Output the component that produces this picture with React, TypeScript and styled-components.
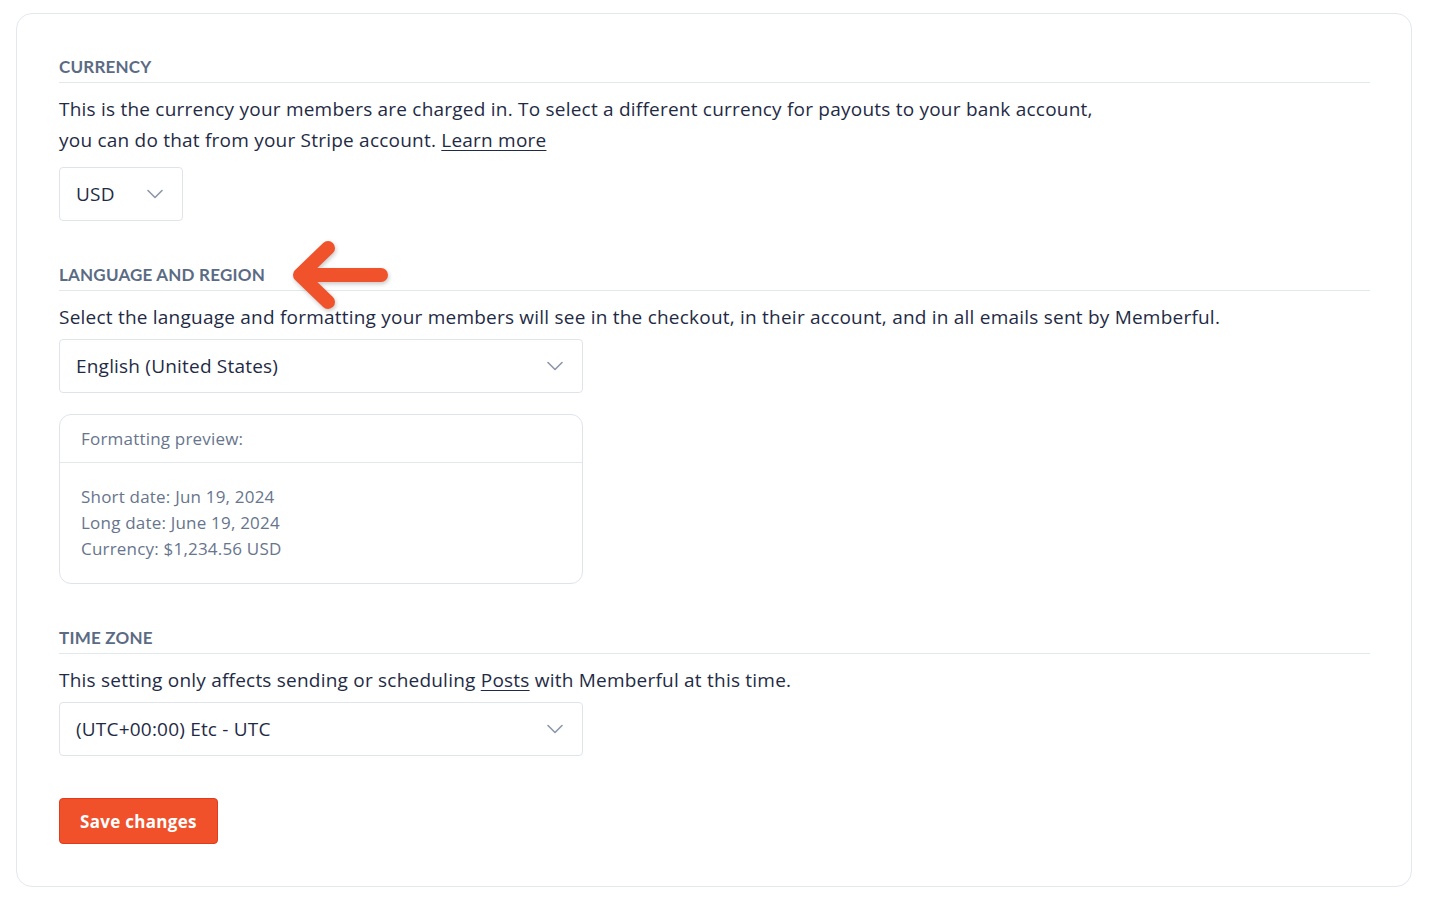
import styled, { createGlobalStyle } from "styled-components";

const GlobalStyle = createGlobalStyle`
  html, body {
    margin: 0;
    padding: 0;
    background: #ffffff;
  }
  body {
    font-family: "Open Sans", "Lato", sans-serif;
    color: #1f2b45;
  }
`;

const Page = styled.div`
  padding: 13px 28px 11px 16px;
`;

const Card = styled.div`
  border: 1px solid #e3e8ef;
  border-radius: 16px;
  padding: 42px 41px 42px 42px;
  background: #fff;
`;

const Section = styled.section<{ $first?: boolean }>`
  position: relative;
  margin-top: ${(p) => (p.$first ? "0" : "43px")};
`;

const Label = styled.h3`
  margin: 0;
  padding-bottom: 4px;
  border-bottom: 1px solid #e3e8ef;
  font-family: "Lato", "Open Sans", sans-serif;
  font-size: 17px;
  line-height: 22px;
  font-weight: 700;
  letter-spacing: 0.2px;
  text-transform: uppercase;
  color: #5b6b84;
`;

const Text = styled.p<{ $gap?: number }>`
  margin: 11px 0 ${(p) => p.$gap ?? 6}px;
  font-size: 19px;
  line-height: 31px;
  letter-spacing: 0.22px;
  color: #1f2b45;
`;

const Link = styled.a`
  color: #1f2b45;
  text-decoration: underline;
  text-underline-offset: 3px;
  cursor: pointer;
`;

const Select = styled.div<{ $width: number }>`
  box-sizing: border-box;
  display: flex;
  align-items: center;
  justify-content: space-between;
  width: ${(p) => p.$width}px;
  height: 54px;
  padding: 0 19px 0 16px;
  border: 1px solid #dfe4ec;
  border-radius: 4px;
  font-size: 19px;
  letter-spacing: 0.2px;
  color: #1f2b45;
  background: #fff;
  cursor: pointer;
`;

const Preview = styled.div`
  box-sizing: border-box;
  width: 524px;
  margin-top: 21px;
  border: 1px solid #dfe4ec;
  border-radius: 12px;
  color: #67758d;
  font-size: 17px;
  letter-spacing: 0.2px;
`;

const PreviewHead = styled.div`
  padding: 13px 21px 12px;
  line-height: 22px;
  border-bottom: 1px solid #e3e8ef;
`;

const PreviewBody = styled.div`
  padding: 21px 21px 21px;
  line-height: 26px;
`;

const SaveButton = styled.button`
  margin-top: 42px;
  height: 46px;
  padding: 0 20px;
  border: 1px solid #e13b1c;
  border-radius: 4px;
  background: #f0512a;
  color: #fff;
  font-family: "Open Sans", sans-serif;
  font-size: 17px;
  font-weight: 700;
  letter-spacing: 0.3px;
  cursor: pointer;
`;

const Arrow = styled.svg`
  position: absolute;
  left: 232px;
  top: -25px;
  filter: drop-shadow(1px 2px 2px rgba(0, 0, 0, 0.22));
`;

function Chevron() {
  return (
    <svg width="16" height="11" viewBox="0 0 16 11" fill="none">
      <path d="M1 1.5 8 8.5l7-7" stroke="#8b97aa" strokeWidth="1.6" strokeLinecap="round" strokeLinejoin="round" />
    </svg>
  );
}

export default function App() {
  return (
    <Page>
      <GlobalStyle />
      <Card>
        <Section $first>
          <Label>Currency</Label>
          <Text $gap={11}>
            This is the currency your members are charged in. To select a different currency for payouts to your bank account,
            <br />
            you can do that from your Stripe account. <Link>Learn more</Link>
          </Text>
          <Select $width={124}>
            <span>USD</span>
            <Chevron />
          </Select>
        </Section>

        <Section>
          <Label>Language and region</Label>
          <Arrow width="100" height="72" viewBox="0 0 100 72" fill="none">
            <path d="M9 36H90M37 9 9 36l28 27" stroke="#f0522b" strokeWidth="14" strokeLinecap="round" strokeLinejoin="round" />
          </Arrow>
          <Text>
            Select the language and formatting your members will see in the checkout, in their account, and in all emails sent by Memberful.
          </Text>
          <Select $width={524}>
            <span>English (United States)</span>
            <Chevron />
          </Select>
          <Preview>
            <PreviewHead>Formatting preview:</PreviewHead>
            <PreviewBody>
              <div>Short date: Jun 19, 2024</div>
              <div>Long date: June 19, 2024</div>
              <div>Currency: $1,234.56 USD</div>
            </PreviewBody>
          </Preview>
        </Section>

        <Section>
          <Label>Time zone</Label>
          <Text>
            This setting only affects sending or scheduling <Link>Posts</Link> with Memberful at this time.
          </Text>
          <Select $width={524}>
            <span>(UTC+00:00) Etc - UTC</span>
            <Chevron />
          </Select>
        </Section>

        <SaveButton>Save changes</SaveButton>
      </Card>
    </Page>
  );
}
